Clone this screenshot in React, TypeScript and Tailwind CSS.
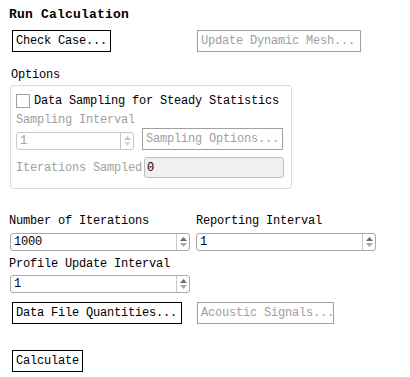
import React from "react";

const mono = "font-['Liberation_Mono','DejaVu_Sans_Mono',monospace] text-[12px] tracking-[-0.2px]";

function Btn({ label, disabled = false, w }: { label: string; disabled?: boolean; w: string }) {
  return (
    <div
      className={`flex h-[22px] ${w} items-center overflow-hidden whitespace-nowrap border px-[3px] leading-none ${
        disabled ? "border-[#a0a0a0] text-[#a0a0a0]" : "border-black text-black"
      }`}
    >
      {label}
    </div>
  );
}

function Spinner({ disabled = false }: { disabled?: boolean }) {
  const up = disabled ? "#c4c4c4" : "#6b6b6b";
  const down = disabled ? "#d6d6d6" : "#a8a8a8";
  return (
    <div className="flex w-[13px] flex-col items-center justify-center gap-[2px] border-l border-[#c8c8c8]">
      <svg width="7" height="4" viewBox="0 0 7 4">
        <path d="M0 4 L3.5 0 L7 4 Z" fill={up} />
      </svg>
      <svg width="7" height="4" viewBox="0 0 7 4">
        <path d="M0 0 L3.5 4 L7 0 Z" fill={down} />
      </svg>
    </div>
  );
}

function SpinInput({ value, w, disabled = false }: { value: string; w: string; disabled?: boolean }) {
  return (
    <div
      className={`flex h-[18px] ${w} rounded-[3px] border bg-white ${
        disabled ? "border-[#c8c8c8] text-[#a0a0a0]" : "border-[#a9a9a9] text-black"
      }`}
    >
      <div className="flex flex-1 items-center pl-[3px] leading-none">{value}</div>
      <Spinner disabled={disabled} />
    </div>
  );
}

export default function App() {
  return (
    <div className={`h-[377px] w-[410px] bg-white ${mono} text-black`}>
      <div className="flex flex-col pl-[9px] pt-[7px]">
        <div className="h-[16px] whitespace-nowrap text-[13px] leading-[16px] font-bold tracking-[0.2px]">Run Calculation</div>

        <div className="mt-[7px] flex gap-[86px] pl-[3px]">
          <Btn label="Check Case..." w="w-[99px]" />
          <Btn label="Update Dynamic Mesh..." disabled w="w-[164px]" />
        </div>

        <div className="mt-[15px] h-[16px] pl-[2px] leading-[16px]">Options</div>

        <div className="ml-[1px] mt-[2px] flex h-[104px] w-[282px] flex-col rounded-[3px] border border-[#dcdcdc] pl-[5px] pt-[8px]">
          <div className="flex h-[14px] items-center gap-[4px]">
            <div className="h-[14px] w-[14px] border border-[#a0a0a0] bg-white" />
            <span className="whitespace-nowrap leading-none">Data Sampling for Steady Statistics</span>
          </div>
          <div className="mt-[4px] h-[16px] leading-[16px] text-[#a0a0a0]">Sampling Interval</div>
          <div className="flex items-end gap-[8px]">
            <SpinInput value="1" w="w-[118px]" disabled />
            <Btn label="Sampling Options..." disabled w="w-[141px]" />
          </div>
          <div className="mt-[7px] flex items-center gap-[2px]">
            <span className="whitespace-nowrap leading-none text-[#a0a0a0]">Iterations Sampled</span>
            <div className="flex h-[21px] w-[140px] items-center rounded-[3px] border border-[#c0c0c0] bg-[#f0f0f0] pl-[2px] leading-none text-black">
              0
            </div>
          </div>
        </div>

        <div className="mt-[24px] flex gap-[6px]">
          <div className="flex w-[181px] flex-col">
            <div className="h-[16px] leading-[16px]">Number of Iterations</div>
            <div className="mt-[4px] pl-[1px]">
              <SpinInput value="1000" w="w-[180px]" />
            </div>
          </div>
          <div className="flex flex-col">
            <div className="h-[16px] leading-[16px]">Reporting Interval</div>
            <div className="mt-[4px]">
              <SpinInput value="1" w="w-[180px]" />
            </div>
          </div>
        </div>

        <div className="mt-[5px] h-[16px] leading-[16px]">Profile Update Interval</div>
        <div className="mt-[3px] pl-[1px]">
          <SpinInput value="1" w="w-[180px]" />
        </div>

        <div className="mt-[9px] flex gap-[15px] pl-[3px]">
          <Btn label="Data File Quantities..." w="w-[170px]" />
          <Btn label="Acoustic Signals..." disabled w="w-[137px]" />
        </div>

        <div className="mt-[26px] pl-[3px]">
          <Btn label="Calculate" w="w-[71px]" />
        </div>
      </div>
    </div>
  );
}
